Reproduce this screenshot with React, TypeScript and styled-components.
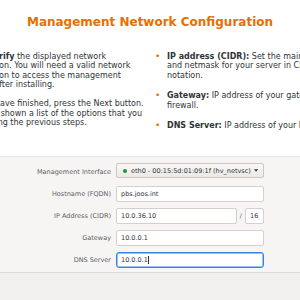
import styled, { createGlobalStyle } from "styled-components";

const GlobalStyle = createGlobalStyle`
  html, body {
    margin: 0;
    padding: 0;
    background: #f2f0ee;
  }
  body {
    font-family: "DejaVu Sans", "Noto Sans", sans-serif;
  }
`;

const Window = styled.div`
  width: 300px;
  height: 300px;
  overflow: hidden;
  display: flex;
  flex-direction: column;
  background: #f2f0ee;
`;

const Header = styled.header`
  flex: none;
  height: 157px;
  box-sizing: border-box;
  padding-top: 15px;
  background: #fff;
  border-bottom: 1px solid #e8e5e2;
`;

const Title = styled.h1`
  margin: 0 0 22.5px;
  font-size: 12px;
  line-height: 14px;
  font-weight: bold;
  color: #e57000;
  text-align: center;
`;

const Columns = styled.div`
  display: flex;
  gap: 14px;
  margin-left: -44px;
  white-space: nowrap;
  font-size: 8px;
  line-height: 9.5px;
  color: #2e3436;
`;

const LeftCol = styled.div`
  flex: none;
  width: 180px;
`;

const Para = styled.p`
  margin: 0 0 9.5px;
`;

const BulletList = styled.ul`
  margin: 0;
  padding: 0;
  list-style: none;
`;

const Item = styled.li`
  display: flex;
  margin-bottom: 11px;
`;

const Bullet = styled.span`
  flex: none;
  width: 17px;
  padding-left: 5px;
  box-sizing: border-box;
  color: #e57000;
  font-size: 9px;
`;

const FormSection = styled.section`
  flex: none;
  padding: 6px 0 4px;
  background: #f6f5f4;
  border-bottom: 1px solid #dcd8d4;
`;

const FormGrid = styled.div`
  display: grid;
  grid-template-columns: 111px 148px;
  column-gap: 5px;
  row-gap: 6px;
  align-items: center;
`;

const Label = styled.label`
  justify-self: end;
  font-size: 6.5px;
  color: #5e5c64;
`;

const Field = styled.div<{ $focused?: boolean; $width?: number }>`
  display: flex;
  align-items: center;
  height: 16px;
  box-sizing: border-box;
  padding: 0 4px;
  flex: ${p => (p.$width ? "none" : "1")};
  width: ${p => (p.$width ? `${p.$width}px` : "auto")};
  background: #fff;
  border: 1px solid ${p => (p.$focused ? "#3584e4" : "#d5d0cc")};
  border-radius: ${p => (p.$focused ? "3px" : "2px")};
  box-shadow: ${p => (p.$focused ? "inset 0 0 0 0.5px #3584e4" : "none")};
  font-size: 6.5px;
  color: #2e3436;
`;

const Caret = styled.span`
  display: inline-block;
  width: 0;
  height: 8px;
  margin-left: 0.5px;
  border-left: 1px solid #2e3436;
`;

const Combo = styled.div`
  display: flex;
  align-items: center;
  gap: 3px;
  height: 15px;
  margin-bottom: 2px;
  box-sizing: border-box;
  padding: 0 5px 0 6px;
  background: linear-gradient(#f9f8f7, #ebe9e6);
  border: 1px solid #cdc7c2;
  border-radius: 2px;
  font-size: 6.5px;
  color: #2e3436;
`;

const Dot = styled.span`
  flex: none;
  width: 4px;
  height: 4px;
  border-radius: 50%;
  background: #1e9630;
`;

const ComboText = styled.span`
  flex: 1;
  padding-left: 1px;
  white-space: nowrap;
`;

const CidrGroup = styled.div`
  display: flex;
  align-items: center;
`;

const Slash = styled.span`
  margin: 0 3px;
  font-size: 6.5px;
  color: #5e5c64;
`;

const Footer = styled.div`
  flex: 1;
  background: #f2f0ee;
`;

export default function App() {
  return (
    <Window>
      <GlobalStyle />
      <Header>
        <Title>Management Network Configuration</Title>
        <Columns>
          <LeftCol>
            <Para>
              <b>Please verify</b> the displayed network
              <br />
              configuration. You will need a valid network
              <br />
              configuration to access the management
              <br />
              interface after installing.
            </Para>
            <Para>
              After you have finished, press the Next button.
              <br />
              You will be shown a list of the options that you
              <br />
              chose during the previous steps.
            </Para>
          </LeftCol>
          <BulletList>
            <Item>
              <Bullet>•</Bullet>
              <span>
                <b>IP address (CIDR):</b> Set the main IP address
                <br />
                and netmask for your server in CIDR
                <br />
                notation.
              </span>
            </Item>
            <Item>
              <Bullet>•</Bullet>
              <span>
                <b>Gateway:</b> IP address of your gateway or
                <br />
                firewall.
              </span>
            </Item>
            <Item>
              <Bullet>•</Bullet>
              <span>
                <b>DNS Server:</b> IP address of your DNS server.
              </span>
            </Item>
          </BulletList>
        </Columns>
      </Header>
      <FormSection>
        <FormGrid>
          <Label>Management Interface</Label>
          <Combo>
            <Dot />
            <ComboText>eth0 - 00:15:5d:01:09:1f (hv_netvsc)</ComboText>
            <svg width="5" height="3" viewBox="0 0 5 3">
              <path d="M0 0h5L2.5 3z" fill="#2e3436" />
            </svg>
          </Combo>
          <Label>Hostname (FQDN)</Label>
          <Field>pbs.joos.int</Field>
          <Label>IP Address (CIDR)</Label>
          <CidrGroup>
            <Field>10.0.36.10</Field>
            <Slash>/</Slash>
            <Field $width={19}>16</Field>
          </CidrGroup>
          <Label>Gateway</Label>
          <Field>10.0.0.1</Field>
          <Label>DNS Server</Label>
          <Field $focused>
            10.0.0.1
            <Caret />
          </Field>
        </FormGrid>
      </FormSection>
      <Footer />
    </Window>
  );
}
